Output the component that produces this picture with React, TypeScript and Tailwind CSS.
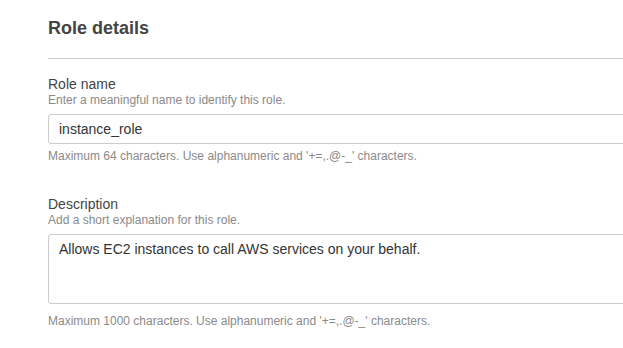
// Rollen-Details: Name und Beschreibung einer IAM-Rolle.

const FONT = "font-['Liberation_Sans',Arial,sans-serif]";

function Field({
  label,
  hint,
  note,
  children,
}: {
  label: string;
  hint: string;
  note: string;
  children: React.ReactNode;
}) {
  return (
    <div>
      <div className="text-[14px] leading-[18px] text-[#444]">{label}</div>
      <div className="text-[12px] leading-[14px] text-[#8a8a8a]">{hint}</div>
      <div className="mt-[7px]">{children}</div>
      <div className="text-[12px] leading-[14px] text-[#8a8a8a]">{note}</div>
    </div>
  );
}

export default function App() {
  return (
    <div className={`${FONT} h-[348px] w-[623px] overflow-hidden bg-white`}>
      <div className="w-[760px] pl-[48px] pt-[16px]">
        <h2 className="text-[18px] font-bold leading-[24px] text-[#444]">Role details</h2>
        <div className="mt-[18px] h-px bg-[#ccc]" />

        <div className="mt-[16px]">
          <Field
            label="Role name"
            hint="Enter a meaningful name to identify this role."
            note="Maximum 64 characters. Use alphanumeric and '+=,.@-_' characters."
          >
            <div className="mb-[5px] h-[30px] rounded-[3px] border border-[#ccc] px-[10px] py-[4px] text-[14px] leading-[20px] text-[#333]">
              instance_role
            </div>
          </Field>
        </div>

        <div className="mt-[32px]">
          <Field
            label="Description"
            hint="Add a short explanation for this role."
            note="Maximum 1000 characters. Use alphanumeric and '+=,.@-_' characters."
          >
            <div className="mb-[10px] h-[70px] rounded-[3px] border border-[#ccc] px-[10px] py-[4px] text-[14px] leading-[20px] text-[#333]">
              Allows EC2 instances to call AWS services on your behalf.
            </div>
          </Field>
        </div>
      </div>
    </div>
  );
}
